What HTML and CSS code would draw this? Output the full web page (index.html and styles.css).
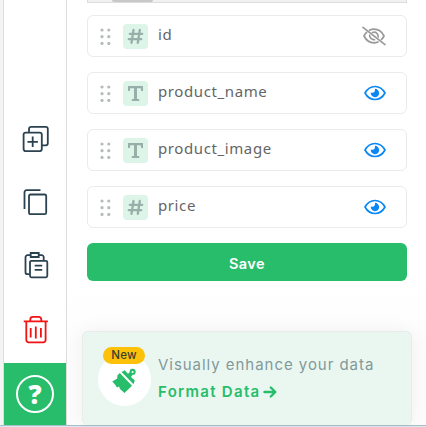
FILE: index.html
```html
<!DOCTYPE html>
<html lang="en">
<head>
<meta charset="utf-8">
<title>Columns</title>
<link rel="stylesheet" href="styles.css">
</head>
<body>
<svg width="0" height="0" class="defs">
  <symbol id="grip" viewBox="0 0 11 17"><g fill="#b4bbba"><circle cx="2" cy="2" r="1.6"/><circle cx="8.8" cy="2" r="1.6"/><circle cx="2" cy="8.7" r="1.6"/><circle cx="8.8" cy="8.7" r="1.6"/><circle cx="2" cy="15.4" r="1.6"/><circle cx="8.8" cy="15.4" r="1.6"/></g></symbol>
  <symbol id="hash" viewBox="0 0 25 25"><path d="M10.500 6 8.500 18.800M16.800 6l-2 12.800M6.800 9.800h12.400M5.800 15.200h12.400" fill="none" stroke="#96afa9" stroke-width="2.300" stroke-linecap="round"/></symbol>
  <symbol id="type" viewBox="0 0 25 25"><path d="M5 5h15v5h-1.800l-.5-2.800h-3.700v10.800h2.200V20H8.800v-2h2.200V7.200H7.300L6.800 10H5z" fill="#96afa9"/></symbol>
  <symbol id="eye" viewBox="0 0 22 16"><path d="M1 8C3.400 3.700 6.800 1.500 11 1.500S18.600 3.700 21 8c-2.400 4.300-5.800 6.500-10 6.500S3.400 12.300 1 8z" fill="none" stroke="#0a87f5" stroke-width="1.700" stroke-linejoin="round"/><path d="M11 3.800A4.200 4.200 0 1 1 6.800 7.400Q9.200 8.300 10.500 6.700 11.200 5.200 11 3.800z" fill="#0a87f5"/></symbol>
  <symbol id="eye-off" viewBox="0 0 26 20"><g fill="none" stroke="#999" stroke-width="1.700" stroke-linecap="round"><path d="M8.500 4.200Q10.600 3.200 13 3.200c4.200 0 7.800 2.400 10 6.800q-1 2-2.600 3.500M17 16q-2 .8-4 .8-6.600 0-10-6.800 1-2 2.600-3.600M11.400 6.500Q16.600 5 17.300 11M8.600 9.300Q8.800 13.500 13.500 13.800"/><path d="M2 1.400 24 18.600"/></g></symbol>
</svg>
<div class="app">
  <div class="edge"></div>
  <nav class="rail">
    <div class="tools">
      <svg class="tool" viewBox="0 0 28 28"><g fill="none" stroke="#2b4250" stroke-width="1.800"><rect x="2.600" y="7.600" width="18.200" height="18.500" rx="2"/><path d="M8 7V3.900a2 2 0 0 1 2-2H24.800a2 2 0 0 1 2 2v14.400a2 2 0 0 1-2 2H21M11.700 11.600v10.400M6.500 16.800h10.400"/></g></svg>
      <svg class="tool" viewBox="0 0 28 28"><g fill="none" stroke="#2b4250" stroke-width="1.800"><rect x="8" y="5.500" width="17.200" height="19.700" rx="1.500"/><path d="M19.500 1.200H5.500a2 2 0 0 0-2 2V20"/></g></svg>
      <svg class="tool" viewBox="0 0 28 28"><g fill="none" stroke="#2b4250" stroke-width="1.800"><rect x="9" y="8.800" width="17.300" height="16.500" rx="1.500"/><path d="M9.700 3.200H6.500a2 2 0 0 0-2 2v15a2 2 0 0 0 2 2H8.500M17.700 3.200h3a2 2 0 0 1 2 2v3M9.700 1h8v4h-8zM13.700 13.600h7.500M13.700 17.800h7.500"/></g></svg>
      <svg class="tool" viewBox="0 0 28 28"><g fill="none" stroke="#f31212" stroke-width="1.800"><path d="M2.700 5.400h24.200M5.300 5.500v18.500a2.300 2.300 0 0 0 2.300 2.300h14.700a2.300 2.300 0 0 0 2.300-2.300V5.500M9.300 5V3.400a2.500 2.500 0 0 1 2.500-2.500h6a2.500 2.500 0 0 1 2.500 2.500V5M9.700 12v9.500M14.800 10.500v12M19.900 12v9.500"/></g></svg>
    </div>
    <div class="help"><span class="help-ring">?</span></div>
  </nav>
  <main class="panel">
    <div class="scrollbar"><div class="thumb"></div></div>
    <div class="fields">
      <div class="field"><svg class="grip"><use href="#grip"/></svg><svg class="kind"><use href="#hash"/></svg><span class="name">id</span><svg class="eye-off"><use href="#eye-off"/></svg></div>
      <div class="field"><svg class="grip"><use href="#grip"/></svg><svg class="kind"><use href="#type"/></svg><span class="name">product_name</span><svg class="eye"><use href="#eye"/></svg></div>
      <div class="field"><svg class="grip"><use href="#grip"/></svg><svg class="kind"><use href="#type"/></svg><span class="name">product_image</span><svg class="eye"><use href="#eye"/></svg></div>
      <div class="field"><svg class="grip"><use href="#grip"/></svg><svg class="kind"><use href="#hash"/></svg><span class="name">price</span><svg class="eye"><use href="#eye"/></svg></div>
    </div>
    <button class="save">Save</button>
    <section class="promo">
      <div class="badge-icon">
        <svg class="brush" viewBox="0 0 26 26"><path d="M8.800 5 21 17.800 13.500 25 9 21 8 18.500 6 19.500 4 16.500 1.200 13.500 6.300 10.500 6.300 7.500z" fill="#28bd6b"/><path d="M10.500 4 13.800 2.200 17 5.700 18.700 4.200A3 3 0 1 1 21.700 6.800L20 8.900 23.800 12.500 22.500 16.300z" fill="#28bd6b"/><circle cx="21.600" cy="3.900" r="1" fill="#fff"/></svg>
        <span class="new">New</span>
      </div>
      <div class="promo-text">
        <div class="lead">Visually enhance your data</div>
        <div class="link"><span>Format Data</span><svg class="arrow" viewBox="0 0 14 12"><path d="M1.500 6h10.500M7.800 1.500 12.300 6 7.800 10.500" fill="none" stroke="#28bd6b" stroke-width="2.400" stroke-linecap="round" stroke-linejoin="round"/></svg></div>
      </div>
    </section>
  </main>
</div>
<div class="bottom-line"></div>
</body>
</html>
```
FILE: styles.css
```css
* { box-sizing: border-box; }
body { margin: 0; width: 426px; height: 427px; overflow: hidden; background: #fff; font-family: Inter, sans-serif; }
.defs { position: absolute; }
.app { display: flex; height: 425px; }
.edge { width: 4px; background: #f4f4f4; border-right: 1px solid #ddd; }
.rail { width: 63px; padding-top: 125px; border-right: 1px solid #ddd; display: flex; flex-direction: column; justify-content: space-between; }
.tools { display: flex; flex-direction: column; align-items: center; gap: 35.600px; }
.tool { width: 28px; height: 28px; }
.help { width: 62px; height: 62px; background: #28bd6b; display: flex; align-items: center; justify-content: center; }
.help-ring { width: 38px; height: 38px; border: 2px solid #fff; border-radius: 50%; color: #fff; font: 800 26px/35px "Open Sans", sans-serif; text-align: center; }
.panel { width: 359px; padding: 0 19px 0 20px; background: linear-gradient(#fff 285px, #fcfcfc 345px); }
.scrollbar { height: 3px; background: #f1f1f1; border: solid #ddd; border-width: 0 1px 1px; padding-left: 24px; }
.thumb { width: 41px; height: 2px; background: #c8c8c8; border-radius: 0 0 3px 3px; }
.fields { padding-top: 12px; display: flex; flex-direction: column; gap: 15px; }
.field { height: 42px; border: 1px solid #ebebeb; border-radius: 6px; background: #fff; display: flex; align-items: center; padding: 0 20px 0 12px; }
.grip { width: 11px; height: 17px; margin-right: 12px; }
.kind { width: 25px; height: 25px; margin: 1px 10px 0 0; background: #ddf4e8; border-radius: 4px; }
.name { flex: 1; font: 15px/20px "Noto Sans", sans-serif; letter-spacing: .6px; color: #656565; margin-bottom: 5px; }
.eye { width: 22px; height: 16px; }
.eye-off { width: 26px; height: 20px; margin-right: -1px; }
.save { display: block; width: 320px; height: 38px; margin-top: 15px; padding: 3px 0 0; border: 0; border-radius: 6px; background: #28bd6b; color: #fff; font: 600 14.500px/35px Inter, sans-serif; letter-spacing: .4px; }
.promo { width: 330px; height: 94px; margin: 50px 0 0 -5px; background: #eaf7f1; border: 1px solid #e8ecea; border-bottom: 0; border-radius: 6px; box-shadow: 0 0 18px rgba(0,0,0,.05); display: flex; padding: 22px 0 0 15px; }
.badge-icon { position: relative; width: 53px; height: 53px; margin-top: -1px; border-radius: 50%; background: #fff; }
.brush { position: absolute; left: 13px; top: 15px; width: 26px; height: 26px; }
.new { position: absolute; left: 5px; top: -6px; width: 42px; height: 17px; border-radius: 9px; background: #fdc10a; color: #34402b; font: 500 11.500px/17px Inter, sans-serif; letter-spacing: .3px; text-align: center; }
.promo-text { margin-left: 7px; white-space: nowrap; }
.lead { font-size: 15px; line-height: 22px; letter-spacing: .96px; color: #82999a; }
.link { margin-top: 5px; display: flex; align-items: center; gap: 2px; font-weight: 600; font-size: 15px; line-height: 22px; letter-spacing: 1.300px; color: #28bd6b; }
.arrow { width: 14px; height: 12px; }
.bottom-line { height: 2px; background: #dbe8ed; border-top: 1px solid #a9bfc9; }
```
